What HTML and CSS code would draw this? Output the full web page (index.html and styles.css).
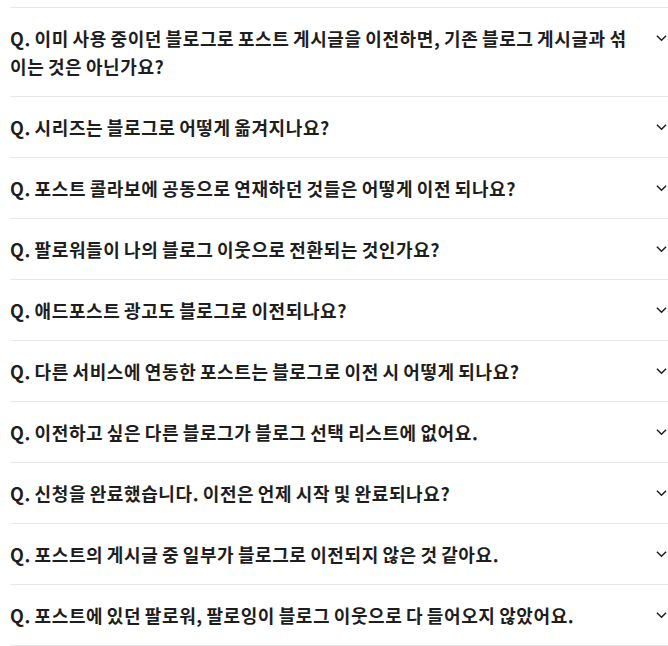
FILE: index.html
```html
<!DOCTYPE html>
<html lang="ko">
<head>
<meta charset="utf-8">
<link rel="stylesheet" href="styles.css">
</head>
<body>
<ul class="faq">
  <li class="item"><span class="q">Q. 이미 사용 중이던 블로그로 포스트 게시글을 이전하면, 기존 블로그 게시글과 섞이는 것은 아닌가요?</span><svg class="chev" viewBox="0 0 12 8"><path d="M1 1.5l5 5 5-5"/></svg></li>
  <li class="item"><span class="q">Q. 시리즈는 블로그로 어떻게 옮겨지나요?</span><svg class="chev" viewBox="0 0 12 8"><path d="M1 1.5l5 5 5-5"/></svg></li>
  <li class="item"><span class="q">Q. 포스트 콜라보에 공동으로 연재하던 것들은 어떻게 이전 되나요?</span><svg class="chev" viewBox="0 0 12 8"><path d="M1 1.5l5 5 5-5"/></svg></li>
  <li class="item"><span class="q">Q. 팔로워들이 나의 블로그 이웃으로 전환되는 것인가요?</span><svg class="chev" viewBox="0 0 12 8"><path d="M1 1.5l5 5 5-5"/></svg></li>
  <li class="item"><span class="q">Q. 애드포스트 광고도 블로그로 이전되나요?</span><svg class="chev" viewBox="0 0 12 8"><path d="M1 1.5l5 5 5-5"/></svg></li>
  <li class="item"><span class="q">Q. 다른 서비스에 연동한 포스트는 블로그로 이전 시 어떻게 되나요?</span><svg class="chev" viewBox="0 0 12 8"><path d="M1 1.5l5 5 5-5"/></svg></li>
  <li class="item"><span class="q">Q. 이전하고 싶은 다른 블로그가 블로그 선택 리스트에 없어요.</span><svg class="chev" viewBox="0 0 12 8"><path d="M1 1.5l5 5 5-5"/></svg></li>
  <li class="item"><span class="q">Q. 신청을 완료했습니다. 이전은 언제 시작 및 완료되나요?</span><svg class="chev" viewBox="0 0 12 8"><path d="M1 1.5l5 5 5-5"/></svg></li>
  <li class="item"><span class="q">Q. 포스트의 게시글 중 일부가 블로그로 이전되지 않은 것 같아요.</span><svg class="chev" viewBox="0 0 12 8"><path d="M1 1.5l5 5 5-5"/></svg></li>
  <li class="item"><span class="q">Q. 포스트에 있던 팔로워, 팔로잉이 블로그 이웃으로 다 들어오지 않았어요.</span><svg class="chev" viewBox="0 0 12 8"><path d="M1 1.5l5 5 5-5"/></svg></li>
</ul>
</body>
</html>
```

FILE: styles.css
```css
html, body {
  margin: 0;
  padding: 0;
  background: #fff;
  overflow: hidden;
}
.faq {
  list-style: none;
  margin: 7px 0 0 10px;
  padding: 0;
  width: 670px;
  border-bottom: 1px solid #e8e8e8;
}
.item {
  display: flex;
  align-items: flex-start;
  border-top: 1px solid #e8e8e8;
  padding: 16px 0;
  font-family: "Noto Sans CJK KR", "Noto Sans", sans-serif;
  font-weight: 700;
  font-size: 18px;
  line-height: 28px;
  color: #1e1e1e;
}
.q {
  flex: 1;
  max-width: 624px;
  letter-spacing: 0.6px;
  word-spacing: -2px;
}
.chev {
  width: 11px;
  height: 8px;
  margin: 10px 0 0 22px;
  fill: none;
  stroke: #1e1e1e;
  stroke-width: 1.6;
}
```
